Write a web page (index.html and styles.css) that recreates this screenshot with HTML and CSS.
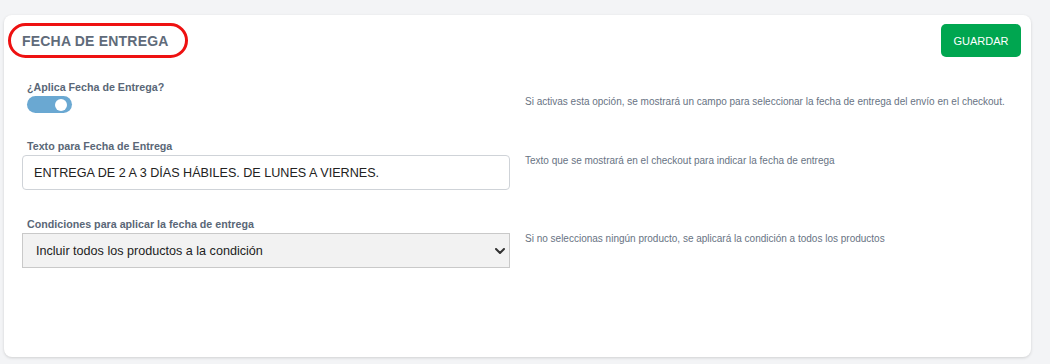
FILE: index.html
```html
<!DOCTYPE html>
<html lang="es">
<head>
  <meta charset="UTF-8" />
  <meta name="viewport" content="width=device-width, initial-scale=1.0"/>
  <title>Fecha de Entrega</title>
  <link rel="stylesheet" href="styles.css">
</head>
<body>
  <div class="card">
    <div class="card-header">
      <h2 class="title">FECHA DE ENTREGA</h2>
      <button type="button" class="btn-save">GUARDAR</button>
    </div>

    <div class="form-row">
      <div class="field">
        <label class="field-label">¿Aplica Fecha de Entrega?</label>
        <span class="switch"><span class="knob"></span></span>
      </div>
      <p class="help">Si activas esta opción, se mostrará un campo para seleccionar la fecha de entrega del envío en el checkout.</p>
    </div>

    <div class="form-row">
      <div class="field">
        <label class="field-label" for="deliveryText">Texto para Fecha de Entrega</label>
        <input type="text" id="deliveryText" class="text-input" value="ENTREGA DE 2 A 3 DÍAS HÁBILES. DE LUNES A VIERNES." />
      </div>
      <p class="help">Texto que se mostrará en el checkout para indicar la fecha de entrega</p>
    </div>

    <div class="form-row">
      <div class="field">
        <label class="field-label" for="conditions">Condiciones para aplicar la fecha de entrega</label>
        <div class="select-wrap">
          <select id="conditions" class="select-input">
            <option>Incluir todos los productos a la condición</option>
          </select>
          <svg class="chevron" width="10" height="6" viewBox="0 0 10 6">
            <path d="M1 1 L5 5 L9 1" fill="none" stroke="#333" stroke-width="2" stroke-linecap="round" stroke-linejoin="round"/>
          </svg>
        </div>
      </div>
      <p class="help">Si no seleccionas ningún producto, se aplicará la condición a todos los productos</p>
    </div>
  </div>
</body>
</html>
```

FILE: styles.css
```css
body {
  font-family: 'Liberation Sans', Arial, sans-serif;
  background: #f3f4f6;
  margin: 0;
  padding: 15px 19px 7px 4px;
}

.card {
  background: #fff;
  border-radius: 8px;
  box-shadow: 0 1px 3px rgba(0, 0, 0, 0.15);
  height: 342px;
  box-sizing: border-box;
  padding: 9px 10px 0 18px;
}

.card-header {
  display: flex;
  justify-content: space-between;
  align-items: flex-start;
  margin-bottom: 23px;
}

.title {
  margin: -1px 0 0 -14px;
  height: 35px;
  box-sizing: border-box;
  display: flex;
  align-items: center;
  padding: 1px 16px 0 11px;
  border: 3px solid #ee1111;
  border-radius: 18px;
  font-size: 14px;
  letter-spacing: 0.2px;
  font-weight: 700;
  color: #5f6b7a;
}

.btn-save {
  width: 80px;
  height: 33px;
  background: #00a650;
  color: #fff;
  border: none;
  border-radius: 5px;
  font-family: inherit;
  font-size: 11px;
  cursor: pointer;
}

.form-row {
  display: flex;
  gap: 15px;
  margin-bottom: 27px;
}

.form-row:nth-of-type(3) {
  margin-bottom: 28px;
}

.field {
  width: 488px;
  flex-shrink: 0;
}

.field-label {
  display: block;
  margin: 0 0 2px 5px;
  font-size: 10.7px;
  line-height: 13px;
  font-weight: 700;
  color: #5a6777;
}

.switch {
  display: flex;
  align-items: center;
  justify-content: flex-end;
  width: 45px;
  height: 17px;
  margin-left: 5px;
  margin-top: 2px;
  padding-right: 5px;
  box-sizing: border-box;
  background: #6aa8d2;
  border-radius: 9px;
}

.knob {
  width: 12px;
  height: 12px;
  border-radius: 50%;
  background: #fff;
}

.text-input {
  width: 100%;
  height: 35px;
  box-sizing: border-box;
  padding: 0 11px;
  border: 1px solid #cfd3d8;
  border-radius: 4px;
  font-family: inherit;
  font-size: 12.6px;
  color: #222;
}

.select-wrap {
  position: relative;
}

.select-input {
  appearance: none;
  width: 100%;
  height: 35px;
  box-sizing: border-box;
  padding: 0 13px;
  border: 1px solid #c9c9c9;
  border-radius: 0;
  background: #f2f2f2;
  font-family: inherit;
  font-size: 12.6px;
  color: #222;
}

.chevron {
  position: absolute;
  right: 5px;
  top: 15px;
}

.help {
  margin: 15px 0 0;
  font-size: 10px;
  line-height: 12px;
  color: #687383;
}
```
